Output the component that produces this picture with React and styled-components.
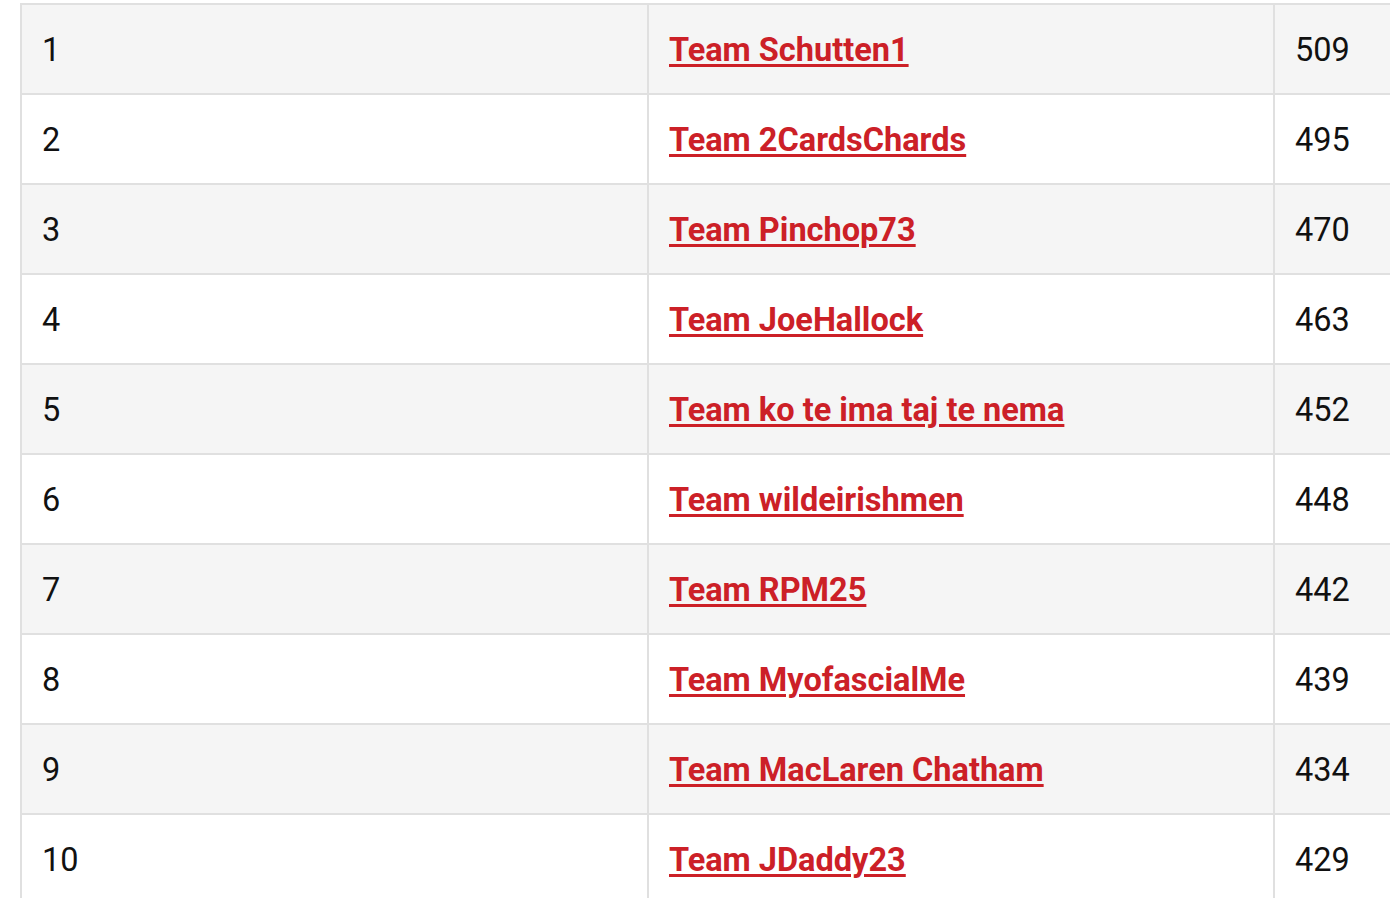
import React from "react";
import styled, { createGlobalStyle } from "styled-components";

const Global = createGlobalStyle`
  html, body { margin: 0; padding: 0; overflow: hidden; background: #fff; }
  body { font-family: Roboto, "Liberation Sans", Arial, sans-serif; }
`;

const Page = styled.div`
  padding: 3px 0 0 20px;
`;

const Table = styled.table`
  border-collapse: collapse;
  table-layout: fixed;
  width: 1882px;
  border: 2px solid #e0e0e0;
`;

const Row = styled.tr`
  height: 90px;
  background: ${(p) => (p.$odd ? "#f5f5f5" : "#ffffff")};
`;

const Cell = styled.td`
  border: 2px solid #e0e0e0;
  height: 90px;
  padding: 2px 20px 0;
  box-sizing: border-box;
  font-size: 32.5px;
  color: #111;
  vertical-align: middle;
  width: ${(p) => p.$w}px;
`;

const TeamLink = styled.a`
  color: #cc2027;
  font-weight: 700;
  text-decoration: underline;
  text-decoration-thickness: 3px;
  text-underline-offset: 3px;
  cursor: pointer;
`;

const rows = [
  ["Team Schutten1", 509],
  ["Team 2CardsChards", 495],
  ["Team Pinchop73", 470],
  ["Team JoeHallock", 463],
  ["Team ko te ima taj te nema", 452],
  ["Team wildeirishmen", 448],
  ["Team RPM25", 442],
  ["Team MyofascialMe", 439],
  ["Team MacLaren Chatham", 434],
  ["Team JDaddy23", 429],
];

export default function App() {
  return (
    <>
      <Global />
      <Page>
        <Table>
          <tbody>
            {rows.map(([name, pts], i) => (
              <Row key={i} $odd={i % 2 === 0}>
                <Cell $w={627}>{i + 1}</Cell>
                <Cell $w={626}>
                  <TeamLink href="#">{name}</TeamLink>
                </Cell>
                <Cell $w={629}>{pts}</Cell>
              </Row>
            ))}
          </tbody>
        </Table>
      </Page>
    </>
  );
}
